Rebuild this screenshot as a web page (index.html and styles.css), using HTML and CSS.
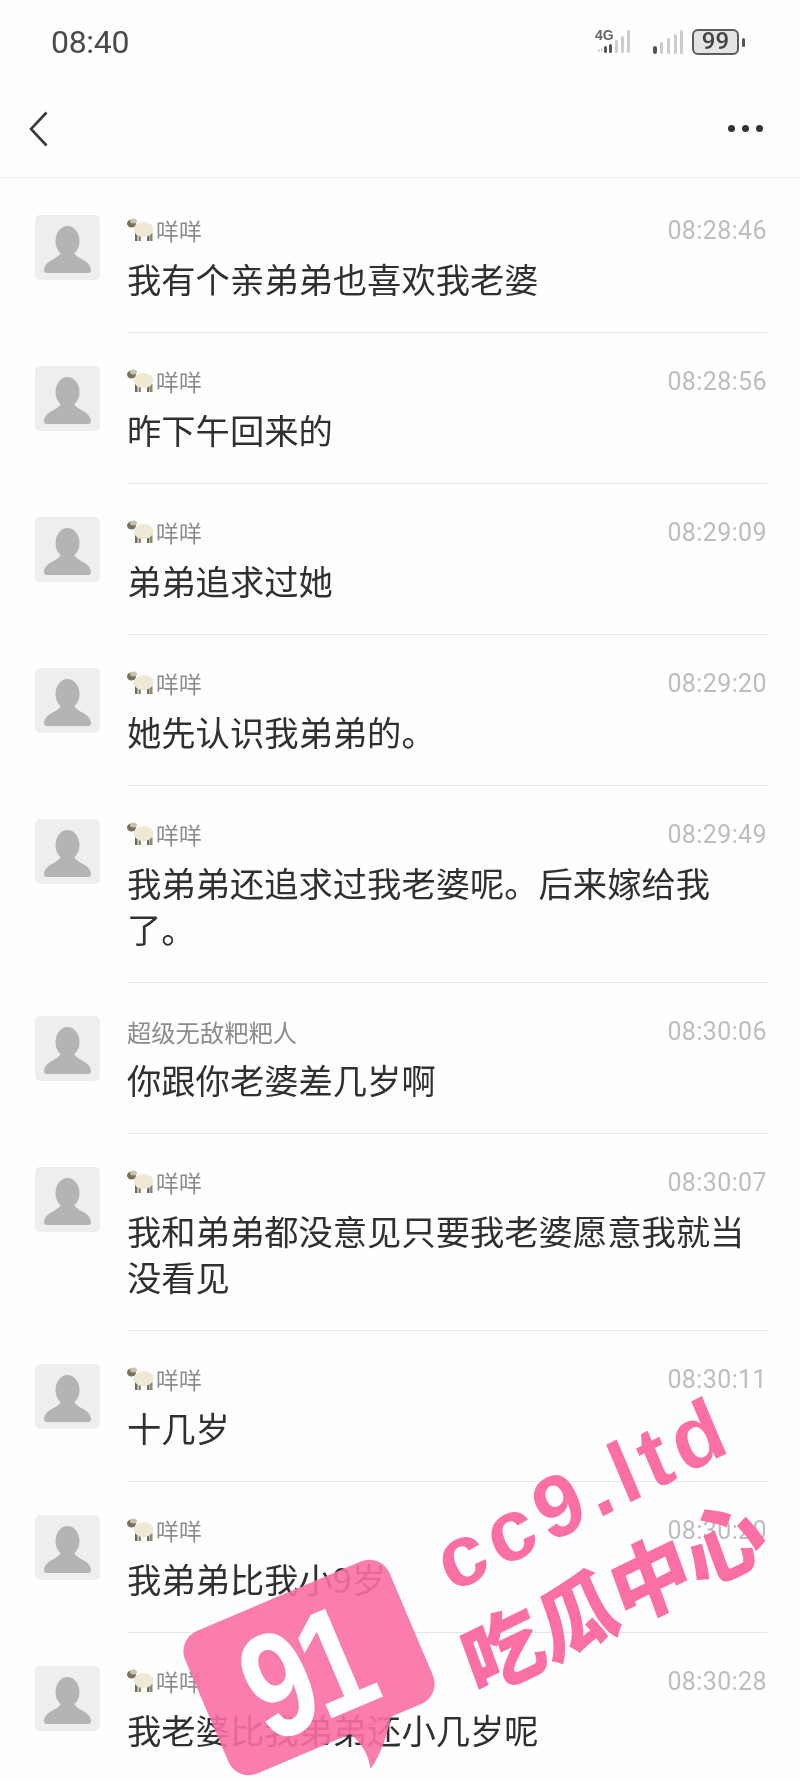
FILE: index.html
```html
<!DOCTYPE html>
<html lang="zh-CN">
<head>
    <meta charset="UTF-8">
    <meta name="viewport" content="width=device-width, initial-scale=1.0">
    <title>聊天记录</title>
    <link rel="stylesheet" href="styles.css">
</head>
<body>

<svg class="defs" width="0" height="0">
    <symbol id="sheep" viewBox="0 0 27 24">
        <rect x="8" y="15" width="2.5" height="8" fill="#6d6a5c"/>
        <rect x="11.5" y="15" width="2.5" height="8" fill="#8c8874"/>
        <rect x="20" y="15" width="2.5" height="8" fill="#6d6a5c"/>
        <rect x="23" y="15" width="2.5" height="8" fill="#8c8874"/>
        <ellipse cx="16.5" cy="11.5" rx="10" ry="7.5" fill="#efe9d3"/>
        <ellipse cx="4.5" cy="5.5" rx="4.5" ry="4" fill="#77725f"/>
        <ellipse cx="6.5" cy="3" rx="3.5" ry="2.5" fill="#c9c3aa"/>
    </symbol>
    <symbol id="person" viewBox="0 0 65 65">
        <ellipse cx="32.5" cy="26" rx="12" ry="15" fill="#b4b4b4"/>
        <path d="M26 36 C26 44 10 44 9 55 C9 57 10 58 12 58 L53 58 C55 58 56 57 56 55 C55 44 39 44 39 36 Z" fill="#b4b4b4"/>
    </symbol>
</svg>

<div class="page">
    <!-- Status bar -->
    <div class="status-bar">
        <span class="clock">08:40</span>
        <div class="status-icons">
            <svg class="signal-4g" width="38" height="28" viewBox="0 0 38 28">
                <text x="0" y="12" class="net-label">4G</text>
                <rect x="3" y="21" width="1.5" height="3" fill="#ccc"/>
                <rect x="6" y="20" width="1.5" height="4" fill="#ccc"/>
                <rect x="9" y="18" width="3" height="7" rx="1.5" fill="#555"/>
                <rect x="14" y="16" width="3" height="9" rx="1.5" fill="#555"/>
                <rect x="20" y="12" width="3" height="13" rx="1.5" fill="#ccc"/>
                <rect x="26" y="8" width="3" height="17" rx="1.5" fill="#ccc"/>
                <rect x="32" y="2" width="3" height="23" rx="1.5" fill="#ccc"/>
            </svg>
            <svg class="signal" width="32" height="26" viewBox="0 0 32 26">
                <rect x="1" y="17" width="4" height="8" rx="2" fill="#555"/>
                <rect x="8" y="13" width="3" height="12" rx="1.5" fill="#ccc"/>
                <rect x="15" y="9" width="3" height="16" rx="1.5" fill="#ccc"/>
                <rect x="22" y="5" width="3" height="20" rx="1.5" fill="#ccc"/>
                <rect x="28" y="1" width="3" height="24" rx="1.5" fill="#ccc"/>
            </svg>
            <div class="battery"><span>99</span></div>
            <div class="battery-nub"></div>
        </div>
    </div>

    <!-- Title bar -->
    <div class="title-bar">
        <svg class="back" width="20" height="36" viewBox="0 0 20 36">
            <path d="M17.5 1.5 L2 18 L17.5 34.5" fill="none" stroke="#3a3a3a" stroke-width="2.6"/>
        </svg>
        <div class="more"><i></i><i></i><i></i></div>
    </div>

    <!-- Messages -->
    <div class="list">
        <div class="row">
            <div class="avatar"><svg width="65" height="65"><use href="#person"/></svg></div>
            <div class="body">
                <div class="head"><div class="name"><svg class="sheep"><use href="#sheep"/></svg>咩咩</div><div class="time">08:28:46</div></div>
                <div class="msg">我有个亲弟弟也喜欢我老婆</div>
            </div>
        </div>
        <div class="row">
            <div class="avatar"><svg width="65" height="65"><use href="#person"/></svg></div>
            <div class="body">
                <div class="head"><div class="name"><svg class="sheep"><use href="#sheep"/></svg>咩咩</div><div class="time">08:28:56</div></div>
                <div class="msg">昨下午回来的</div>
            </div>
        </div>
        <div class="row">
            <div class="avatar"><svg width="65" height="65"><use href="#person"/></svg></div>
            <div class="body">
                <div class="head"><div class="name"><svg class="sheep"><use href="#sheep"/></svg>咩咩</div><div class="time">08:29:09</div></div>
                <div class="msg">弟弟追求过她</div>
            </div>
        </div>
        <div class="row">
            <div class="avatar"><svg width="65" height="65"><use href="#person"/></svg></div>
            <div class="body">
                <div class="head"><div class="name"><svg class="sheep"><use href="#sheep"/></svg>咩咩</div><div class="time">08:29:20</div></div>
                <div class="msg">她先认识我弟弟的。</div>
            </div>
        </div>
        <div class="row">
            <div class="avatar"><svg width="65" height="65"><use href="#person"/></svg></div>
            <div class="body">
                <div class="head"><div class="name"><svg class="sheep"><use href="#sheep"/></svg>咩咩</div><div class="time">08:29:49</div></div>
                <div class="msg">我弟弟还追求过我老婆呢。后来嫁给我了。</div>
            </div>
        </div>
        <div class="row">
            <div class="avatar"><svg width="65" height="65"><use href="#person"/></svg></div>
            <div class="body">
                <div class="head"><div class="name name-long">超级无敌粑粑人</div><div class="time">08:30:06</div></div>
                <div class="msg">你跟你老婆差几岁啊</div>
            </div>
        </div>
        <div class="row">
            <div class="avatar"><svg width="65" height="65"><use href="#person"/></svg></div>
            <div class="body">
                <div class="head"><div class="name"><svg class="sheep"><use href="#sheep"/></svg>咩咩</div><div class="time">08:30:07</div></div>
                <div class="msg">我和弟弟都没意见只要我老婆愿意我就当没看见</div>
            </div>
        </div>
        <div class="row">
            <div class="avatar"><svg width="65" height="65"><use href="#person"/></svg></div>
            <div class="body">
                <div class="head"><div class="name"><svg class="sheep"><use href="#sheep"/></svg>咩咩</div><div class="time">08:30:11</div></div>
                <div class="msg">十几岁</div>
            </div>
        </div>
        <div class="row">
            <div class="avatar"><svg width="65" height="65"><use href="#person"/></svg></div>
            <div class="body">
                <div class="head"><div class="name"><svg class="sheep"><use href="#sheep"/></svg>咩咩</div><div class="time">08:30:20</div></div>
                <div class="msg">我弟弟比我小9岁</div>
            </div>
        </div>
        <div class="row">
            <div class="avatar"><svg width="65" height="65"><use href="#person"/></svg></div>
            <div class="body">
                <div class="head"><div class="name"><svg class="sheep"><use href="#sheep"/></svg>咩咩</div><div class="time">08:30:28</div></div>
                <div class="msg">我老婆比我弟弟还小几岁呢</div>
            </div>
        </div>
    </div>

    <!-- Watermark -->
    <div class="mark-bubble">
        <svg class="mark-tail" width="50" height="44" viewBox="0 0 50 44">
            <path d="M0 0 L46 0 C36 16 22 32 6 42 C10 28 8 14 0 0 Z" fill="#fb6fa5"/>
        </svg>
        <span class="mark-91">91</span>
    </div>
    <div class="mark-url">cc9.ltd</div>
    <div class="mark-cn">吃瓜中心</div>
</div>

</body>
</html>
```

FILE: styles.css
```css
body {
    margin: 0;
    background-color: #fefefe;
    font-family: "Noto Sans CJK SC", "Noto Sans", sans-serif;
    color: #2f2f2f;
}
.defs {
    position: absolute;
}
.page {
    position: relative;
    width: 800px;
    height: 1781px;
    overflow: hidden;
    filter: blur(0.6px); /* the source is a soft, recompressed photo */
}

/* status bar */
.status-bar {
    height: 84px;
    display: flex;
    align-items: center;
    justify-content: space-between;
    padding: 0 55px 0 51px;
    box-sizing: border-box;
}
.clock {
    font-family: Roboto, sans-serif;
    font-size: 32px;
    letter-spacing: -0.3px;
    color: #4a4a4a;
}
.status-icons {
    display: flex;
    align-items: center;
}
.net-label {
    font-family: "Liberation Sans", sans-serif;
    font-size: 14px;
    font-weight: bold;
    fill: #666;
}
.signal-4g {
    margin-right: 19px;
}
.signal {
    margin-right: 8px;
}
.battery {
    width: 47px;
    height: 26px;
    box-sizing: border-box;
    border: 2.5px solid #5c5c5c;
    border-radius: 6px;
    background-color: #e4e4e4;
    text-align: center;
    font-family: Roboto, sans-serif;
    font-size: 24px;
    font-weight: 500;
    line-height: 21px;
    color: #444;
}
.battery-nub {
    width: 3px;
    height: 9px;
    margin-left: 3px;
    border-radius: 2px;
    background-color: #555;
}

/* title bar */
.title-bar {
    height: 89px;
    display: flex;
    align-items: center;
    justify-content: space-between;
    padding: 0 37px 4px 29px;
    border-bottom: 1px solid #eeeeee;
}
.more {
    display: flex;
    gap: 7px;
}
.more i {
    width: 7px;
    height: 7px;
    border-radius: 50%;
    background-color: #333;
}

/* message list */
.list {
    margin-top: 4px;
}
.row {
    display: flex;
    padding-left: 35px;
}
.avatar {
    width: 65px;
    height: 65px;
    margin-top: 33px;
    margin-right: 27px;
    border-radius: 5px;
    background-color: #eeeeee;
    flex-shrink: 0;
}
.avatar svg {
    display: block;
}
.body {
    width: 640px;
    box-sizing: border-box;
    padding: 33px 20px 31px 0;
    border-bottom: 1px solid #e6e6e6;
}
.row:last-child .body {
    border-bottom: none;
}
.head {
    height: 40px;
    margin-right: -20px;
    display: flex;
    justify-content: space-between;
    align-items: flex-start;
}
.name {
    display: flex;
    align-items: center;
    height: 30px;
    font-size: 23px;
    color: #8c8c8c;
}
.name-long {
    font-size: 24.3px;
}
.sheep {
    width: 27px;
    height: 24px;
    margin-right: 2px;
}
.time {
    font-family: Roboto, sans-serif;
    font-size: 25px;
    line-height: 32px;
    letter-spacing: 0.4px;
    color: #bdbdbd;
}
.msg {
    font-size: 34.3px;
    line-height: 46px;
    color: #303030;
}

/* watermark, sits over the list */
.mark-bubble {
    position: absolute;
    left: 198px;
    top: 1590px;
    width: 222px;
    height: 155px;
    border-radius: 22px;
    background-color: rgba(251, 111, 165, 0.9);
    transform: rotate(-23deg);
}
.mark-tail {
    position: absolute;
    left: 122px;
    top: 153px;
    opacity: 0.9;
}
.mark-91 {
    position: absolute;
    left: 44px;
    top: 6px;
    font-family: "Liberation Sans", sans-serif;
    font-size: 150px;
    font-weight: bold;
    line-height: 150px;
    letter-spacing: -8px;
    color: #ffffff;
    transform: scaleX(0.8);
    transform-origin: left center;
}
.mark-url {
    position: absolute;
    left: 422px;
    top: 1448px;
    font-family: "Liberation Sans", sans-serif;
    font-size: 86px;
    font-weight: bold;
    line-height: 90px;
    letter-spacing: 7px;
    color: #fb6fa5;
    transform: rotate(-27deg) skewX(-4deg);
}
.mark-cn {
    position: absolute;
    left: 448px;
    top: 1548px;
    font-size: 82px;
    font-weight: 900;
    line-height: 90px;
    white-space: nowrap;
    color: #fb6fa5;
    transform: rotate(-26deg) skewX(-6deg);
}
```
